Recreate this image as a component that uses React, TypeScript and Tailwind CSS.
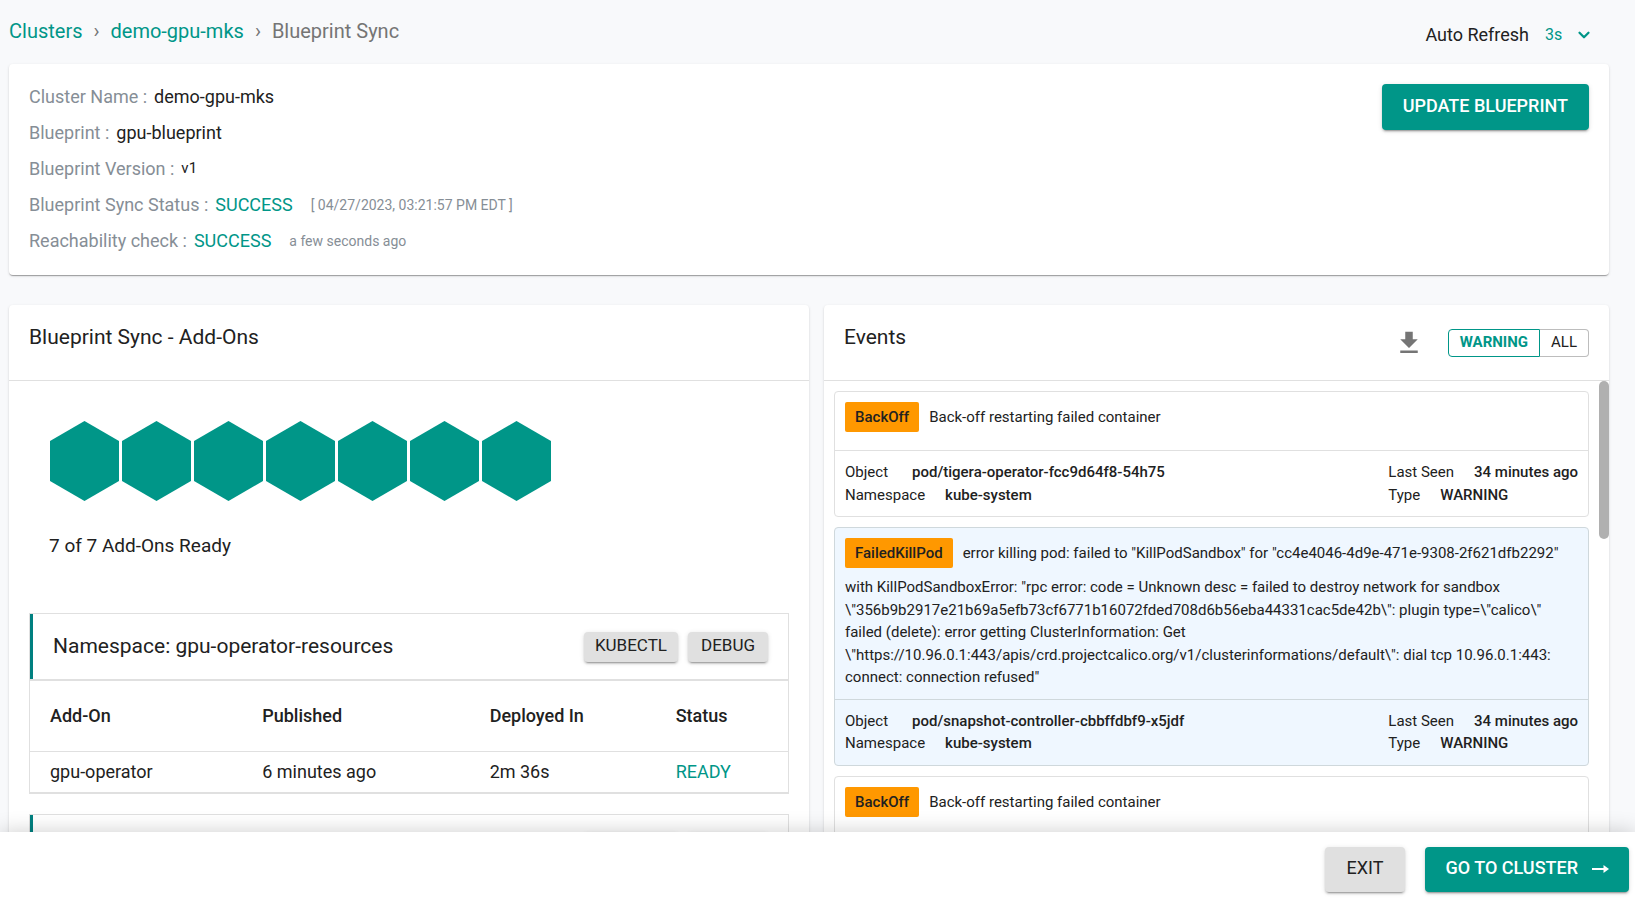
import React from 'react';
import { ChevronDown } from 'lucide-react';
import { MdFileDownload } from 'react-icons/md';

const cardShadow =
  'shadow-[0_2px_1px_-1px_rgba(0,0,0,0.2),0_1px_1px_0_rgba(0,0,0,0.14),0_1px_3px_0_rgba(0,0,0,0.12)]';
const buttonShadow =
  'shadow-[0_3px_1px_-2px_rgba(0,0,0,0.2),0_2px_2px_0_rgba(0,0,0,0.14),0_1px_5px_0_rgba(0,0,0,0.12)]';

const namespaces = [
  {
    name: 'gpu-operator-resources',
    addOns: [{ name: 'gpu-operator', published: '6 minutes ago', deployedIn: '2m 36s', status: 'READY' }],
  },
  {
    name: 'kube-system',
    addOns: [],
  },
];

const events = [
  {
    reason: 'BackOff',
    message: 'Back-off restarting failed container',
    object: 'pod/tigera-operator-fcc9d64f8-54h75',
    namespace: 'kube-system',
    lastSeen: '34 minutes ago',
    type: 'WARNING',
  },
  {
    reason: 'FailedKillPod',
    message:
      'error killing pod: failed to "KillPodSandbox" for "cc4e4046-4d9e-471e-9308-2f621dfb2292" with KillPodSandboxError: "rpc error: code = Unknown desc = failed to destroy network for sandbox \\"356b9b2917e21b69a5efb73cf6771b16072fded708d6b56eba44331cac5de42b\\": plugin type=\\"calico\\" failed (delete): error getting ClusterInformation: Get \\"https://10.96.0.1:443/apis/crd.projectcalico.org/v1/clusterinformations/default\\": dial tcp 10.96.0.1:443: connect: connection refused"',
    object: 'pod/snapshot-controller-cbbffdbf9-x5jdf',
    namespace: 'kube-system',
    lastSeen: '34 minutes ago',
    type: 'WARNING',
  },
  {
    reason: 'BackOff',
    message: 'Back-off restarting failed container',
    object: 'pod/tigera-operator-fcc9d64f8-54h75',
    namespace: 'kube-system',
    lastSeen: '34 minutes ago',
    type: 'WARNING',
  },
];

const InfoRow = ({ label, children }: { label: string; children: React.ReactNode }) => (
  <div className="flex h-9 items-center">
    <dt className="text-[#868e96]">{label} :</dt>
    <dd className="ml-[7px] flex items-center gap-[18px]">{children}</dd>
  </div>
);

const Field = ({ label, value }: { label: string; value: string }) => (
  <div className="flex gap-5">
    <dt>{label}</dt>
    <dd className="font-medium">{value}</dd>
  </div>
);

const NamespaceCard = ({ namespace }: { namespace: (typeof namespaces)[number] }) => (
  <section className="mb-5 border border-b-2 border-[#e0e0e0]">
    <div className="flex h-[67px] items-center border-b-2 border-[#e0e0e0]">
      <div className="w-[3px] self-stretch bg-[#008080]" />
      <h3 className="ml-5 flex-1 text-[21px]">Namespace: {namespace.name}</h3>
      <div className="mr-5 flex gap-[10px]">
        <button className={`h-[30px] rounded bg-[#e0e0e0] px-[11px] pb-1 text-[17px] leading-6 ${buttonShadow}`}>
          KUBECTL
        </button>
        <button className={`h-[30px] rounded bg-[#e0e0e0] px-[13px] pb-1 text-[17px] leading-6 ${buttonShadow}`}>
          DEBUG
        </button>
      </div>
    </div>
    {namespace.addOns.length > 0 && (
      <table className="w-full table-fixed text-left text-lg">
        <thead>
          <tr className="h-[70px] border-b border-[#e0e0e0]">
            <th className="w-[28%] pl-5 font-medium">Add-On</th>
            <th className="w-[30%] pl-5 font-medium">Published</th>
            <th className="w-[186px] pl-5 font-medium">Deployed In</th>
            <th className="pl-5 font-medium">Status</th>
          </tr>
        </thead>
        <tbody>
          {namespace.addOns.map((addOn) => (
            <tr key={addOn.name} className="h-[41px]">
              <td className="pl-5">{addOn.name}</td>
              <td className="pl-5">{addOn.published}</td>
              <td className="pl-5">{addOn.deployedIn}</td>
              <td className="pl-5 text-[#009688]">{addOn.status}</td>
            </tr>
          ))}
        </tbody>
      </table>
    )}
  </section>
);

const EventCard = ({ event, shaded }: { event: (typeof events)[number]; shaded: boolean }) => (
  <article
    className={`rounded border text-[15px] leading-normal ${
      shaded ? 'border-[#cfd8dc] bg-[#eff7ff]' : 'border-[#e0e0e0] bg-white'
    }`}
  >
    <p className="border-b border-inherit p-[10px]">
      <span className="mr-[10px] mb-2 inline-block h-[30px] rounded-xs bg-[#ff9800] px-[10px] leading-[30px] font-medium">
        {event.reason}
      </span>
      {event.message}
    </p>
    <div className="flex justify-between p-[10px]">
      <dl className="[&_dt]:min-w-[47px]">
        <Field label="Object" value={event.object} />
        <Field label="Namespace" value={event.namespace} />
      </dl>
      <dl>
        <Field label="Last Seen" value={event.lastSeen} />
        <Field label="Type" value={event.type} />
      </dl>
    </div>
  </article>
);

const App = () => {
  return (
    <div className="flex h-screen flex-col bg-[#f8f9fb] font-[Roboto,sans-serif] text-[#212121]">
      <main className="min-h-0 flex-1 overflow-y-auto pr-[26px] pl-[9px] [scrollbar-width:none]">
        <header className="flex h-16 items-center justify-between">
          <nav aria-label="Breadcrumb" className="flex items-center gap-[11px] pb-[2px] text-xl text-[#757575]">
            <a href="#clusters" className="text-[#009688]">Clusters</a>
            <span>›</span>
            <a href="#demo-gpu-mks" className="text-[#009688]">demo-gpu-mks</a>
            <span>›</span>
            <span>Blueprint Sync</span>
          </nav>
          <div className="mr-4 flex items-center pt-[6px]">
            <label htmlFor="refresh" className="text-lg">Auto Refresh</label>
            <div className="relative ml-4">
              <select id="refresh" className="w-12 appearance-none bg-transparent text-base text-[#009688]">
                <option>3s</option>
                <option>10s</option>
                <option>30s</option>
              </select>
              <ChevronDown className="pointer-events-none absolute top-[3px] right-0 size-[18px] text-[#009688]" strokeWidth={3} />
            </div>
          </div>
        </header>

        <section className={`flex items-start justify-between rounded bg-white px-5 pt-[15px] pb-4 ${cardShadow}`}>
          <dl className="text-lg">
            <InfoRow label="Cluster Name">demo-gpu-mks</InfoRow>
            <InfoRow label="Blueprint">gpu-blueprint</InfoRow>
            <InfoRow label="Blueprint Version">
              <span className="text-[15px]">v1</span>
            </InfoRow>
            <InfoRow label="Blueprint Sync Status">
              <span className="text-[#009688]">SUCCESS</span>
              <span className="text-sm text-[#868e96]">[ 04/27/2023, 03:21:57 PM EDT ]</span>
            </InfoRow>
            <InfoRow label="Reachability check">
              <span className="text-[#009688]">SUCCESS</span>
              <span className="text-sm text-[#868e96]">a few seconds ago</span>
            </InfoRow>
          </dl>
          <button className={`mt-[5px] h-[46px] rounded bg-[#009688] px-[21px] pb-[2px] text-lg font-medium text-white ${buttonShadow}`}>
            UPDATE BLUEPRINT
          </button>
        </section>

        <div className="mt-[30px] grid grid-cols-[800fr_785fr] gap-[15px]">
          <section className={`rounded bg-white ${cardShadow}`}>
            <div className="flex h-[76px] items-center border-b border-[#e0e0e0] px-5">
              <h2 className="pb-[10px] text-[21px]">Blueprint Sync - Add-Ons</h2>
            </div>
            <div className="p-5">
              <div className="p-5">
                <div className="flex gap-[3px] pl-px">
                  {Array.from({ length: 7 }, (_, i) => (
                    <svg key={i} viewBox="0 0 69 80" className="h-20 w-[69px] fill-[#009688]">
                      <polygon points="34.5,0 69,20 69,60 34.5,80 0,60 0,20" />
                    </svg>
                  ))}
                </div>
                <p className="mt-[31px] text-[19px] leading-7">7 of 7 Add-Ons Ready</p>
              </div>
              <div className="mt-[33px]">
                {namespaces.map((namespace) => (
                  <NamespaceCard key={namespace.name} namespace={namespace} />
                ))}
              </div>
            </div>
          </section>

          <section className={`rounded bg-white ${cardShadow}`}>
            <div className="flex h-[76px] items-center border-b border-[#e0e0e0] px-5">
              <h2 className="flex-1 pb-[10px] text-[21px]">Events</h2>
              <button aria-label="Download events" className="mr-6 text-[#757575]">
                <MdFileDownload className="size-[30px]" />
              </button>
              <div className="flex text-[15px]">
                <button className="h-7 rounded-l border border-[#009688] px-[11px] font-bold text-[#009688]">
                  WARNING
                </button>
                <button className="h-7 rounded-r border border-l-0 border-[#bdbdbd] px-[11px]">ALL</button>
              </div>
            </div>
            <div className="relative">
              <div className="flex flex-col gap-[10px] py-[10px] pr-5 pl-[10px]">
                {events.map((event, i) => (
                  <EventCard key={i} event={event} shaded={i % 2 === 1} />
                ))}
              </div>
              {/* scroll thumb */}
              <div className="absolute top-0 right-0 h-[158px] w-[10px] rounded-full bg-[#b0b0b0]" />
            </div>
          </section>
        </div>
      </main>

      <footer className="relative flex h-[66px] shrink-0 items-center justify-end gap-5 bg-white pt-2 pr-[6px] shadow-[0_0_20px_rgba(0,0,0,0.2)]">
        <button className={`h-[45px] rounded bg-[#e0e0e0] px-[22px] pb-[2px] text-lg ${buttonShadow}`}>EXIT</button>
        <button className={`flex h-[45px] items-center gap-[14px] rounded bg-[#009688] px-5 pb-[2px] text-lg font-medium text-white ${buttonShadow}`}>
          GO TO CLUSTER
          <svg viewBox="0 0 17 10" className="mt-px h-[10px] w-[17px]">
            <path d="M0 4h12v2H0z" fill="currentColor" />
            <path d="M11.5 1 17 5l-5.500 4z" fill="currentColor" />
          </svg>
        </button>
      </footer>
    </div>
  );
};

export default App;
